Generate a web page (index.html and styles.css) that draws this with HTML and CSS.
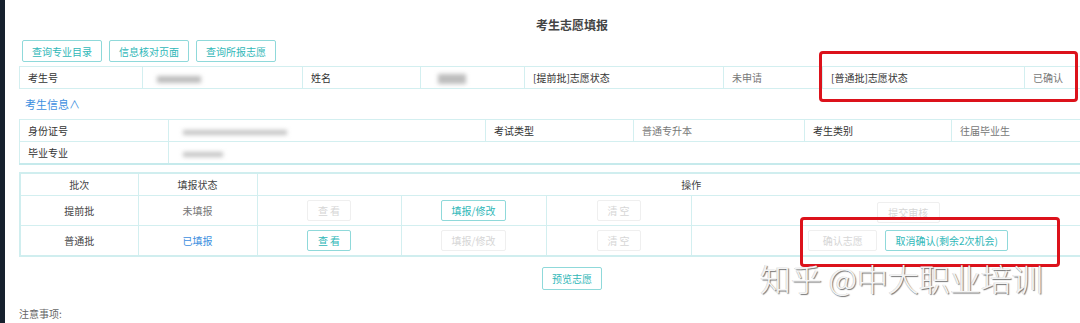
FILE: index.html
```html
<!DOCTYPE html>
<html lang="zh-CN">
<head>
    <meta charset="UTF-8">
    <meta name="viewport" content="width=device-width, initial-scale=1.0">
    <title>考生志愿填报</title>
    <link rel="stylesheet" href="styles.css">
</head>
<body>
    <div class="page">
        <h2 class="title">考生志愿填报</h2>

        <div class="toolbar">
            <button class="btn btn-wide">查询专业目录</button>
            <button class="btn btn-wide">信息核对页面</button>
            <button class="btn btn-wide">查询所报志愿</button>
        </div>

        <table class="grid status-grid">
            <colgroup>
                <col style="width:123px"><col style="width:160px"><col style="width:118px"><col style="width:104px">
                <col style="width:199px"><col style="width:99px"><col style="width:202px"><col style="width:101px">
            </colgroup>
            <tr>
                <td>考生号</td>
                <td class="value"><span class="blur" style="width:44px"></span></td>
                <td>姓名</td>
                <td class="value"><span class="blur blur-name" style="width:28px"></span></td>
                <td>[提前批]志愿状态</td>
                <td class="value">未申请</td>
                <td>[普通批]志愿状态</td>
                <td class="value">已确认</td>
            </tr>
        </table>

        <a class="toggle">考生信息∧</a>

        <table class="grid info-grid">
            <colgroup>
                <col style="width:149px"><col style="width:317px"><col style="width:148px">
                <col style="width:171px"><col style="width:147px"><col style="width:174px">
            </colgroup>
            <tr>
                <td>身份证号</td>
                <td class="value"><span class="blur blur-thin" style="width:104px"></span></td>
                <td>考试类型</td>
                <td class="value">普通专升本</td>
                <td>考生类别</td>
                <td class="value">往届毕业生</td>
            </tr>
            <tr>
                <td>毕业专业</td>
                <td class="value" colspan="5"><span class="blur blur-thin" style="width:40px"></span></td>
            </tr>
        </table>

        <table class="grid batch-grid">
            <colgroup>
                <col style="width:118px"><col style="width:119px"><col style="width:144px">
                <col style="width:145px"><col style="width:145px"><col style="width:435px">
            </colgroup>
            <tr class="head">
                <td>批次</td>
                <td>填报状态</td>
                <td colspan="4">操作</td>
            </tr>
            <tr>
                <td>提前批</td>
                <td class="muted">未填报</td>
                <td><button class="btn btn-sm" disabled>查 看</button></td>
                <td><button class="btn btn-md">填报/修改</button></td>
                <td><button class="btn btn-sm" disabled>清 空</button></td>
                <td><button class="btn btn-submit" disabled>提交审核</button></td>
            </tr>
            <tr>
                <td>普通批</td>
                <td class="done">已填报</td>
                <td><button class="btn btn-sm">查 看</button></td>
                <td><button class="btn btn-md" disabled>填报/修改</button></td>
                <td><button class="btn btn-sm" disabled>清 空</button></td>
                <td>
                    <div class="actions">
                        <button class="btn btn-confirm" disabled>确认志愿</button>
                        <button class="btn btn-cancel">取消确认(剩余2次机会)</button>
                    </div>
                </td>
            </tr>
        </table>

        <div class="preview">
            <button class="btn btn-preview">预览志愿</button>
        </div>

        <p class="notice">注意事项:</p>
    </div>

    <div class="mark mark-status"></div>
    <div class="mark mark-actions"></div>
    <div class="watermark">知乎 @中大职业培训</div>
</body>
</html>
```

FILE: styles.css
```css
body {
    margin: 0;
    width: 1080px;
    height: 323px;
    overflow: hidden;
    position: relative;
    background: #fff;
    border-left: 5px solid #16212e;
    box-sizing: border-box;
    font-family: "Noto Sans CJK SC", "Noto Sans", sans-serif;
    font-size: 10px;
    color: #333;
}

.page {
    width: 1106px;
    margin-left: 14px;
}

.title {
    margin: 0;
    padding-top: 17px;
    height: 23px;
    line-height: 16px;
    font-size: 12px;
    font-weight: bold;
    color: #444;
    text-align: center;
}

.toolbar {
    display: flex;
    gap: 7px;
    padding-left: 3px;
    height: 26px;
}

.btn {
    font-family: inherit;
    font-size: 10px;
    background: #fff;
    color: #2fb7b8;
    border: 1px solid #8fd9da;
    border-radius: 2px;
    padding: 0;
    height: 21px;
    cursor: pointer;
}

.btn:disabled {
    color: #d6d6d6;
    border-color: #efefef;
    cursor: default;
}

.btn-wide {
    width: 80px;
    height: 22px;
}

.btn-sm {
    width: 44px;
}

.btn-md {
    width: 65px;
}

.btn-submit {
    width: 63px;
    margin-top: 4px;
}

.btn-confirm {
    width: 69px;
}

.btn-cancel {
    width: 123px;
}

.btn-preview {
    width: 60px;
    height: 23px;
}

.grid {
    width: 1106px;
    table-layout: fixed;
    border-collapse: collapse;
    border: 1px solid #c6eaec;
}

.grid td {
    border: 1px solid #d3eff0;
    padding: 0 8px;
    height: 21px;
    white-space: nowrap;
    overflow: hidden;
}

.grid .value {
    color: #777;
}

.blur {
    display: inline-block;
    height: 7px;
    background: #bdbdbd;
    filter: blur(2px);
    margin-left: 6px;
    vertical-align: middle;
}

.blur-name {
    height: 10px;
    margin-left: 9px;
}

.blur-thin {
    height: 5px;
    background: #c4c4c4;
}

.toggle {
    display: block;
    height: 30px;
    line-height: 30px;
    padding-left: 6px;
    font-size: 11px;
    color: #3d8fe0;
}

.info-grid {
    border-bottom: 2px solid #c6eaec;
}

.batch-grid {
    margin-top: 7px;
    border: 2px solid #d0eeef;
}

.batch-grid td {
    text-align: center;
    height: 29px;
    color: #444;
}

.batch-grid .head td {
    height: 21px;
}

.batch-grid .muted {
    color: #777;
}

.batch-grid .done {
    color: #3d8fe0;
}

.actions {
    display: flex;
    justify-content: center;
    gap: 8px;
}

.preview {
    display: flex;
    justify-content: center;
    padding-top: 10px;
}

.notice {
    margin: 16px 0 0;
    color: #666;
}

.mark {
    position: absolute;
    border: 3px solid #dc121b;
    border-radius: 4px;
}

.mark-status {
    left: 814px;
    top: 51px;
    width: 253px;
    height: 45px;
}

.mark-actions {
    left: 795px;
    top: 217px;
    width: 254px;
    height: 44px;
}

.watermark {
    position: absolute;
    left: 755px;
    top: 258px;
    font-size: 31px;
    line-height: 40px;
    font-weight: 300;
    color: #f4f4f4;
    text-shadow: 1px 1px 1px rgba(0, 0, 0, 0.55), -1px 0 0 rgba(0, 0, 0, 0.15);
    white-space: nowrap;
}
```
